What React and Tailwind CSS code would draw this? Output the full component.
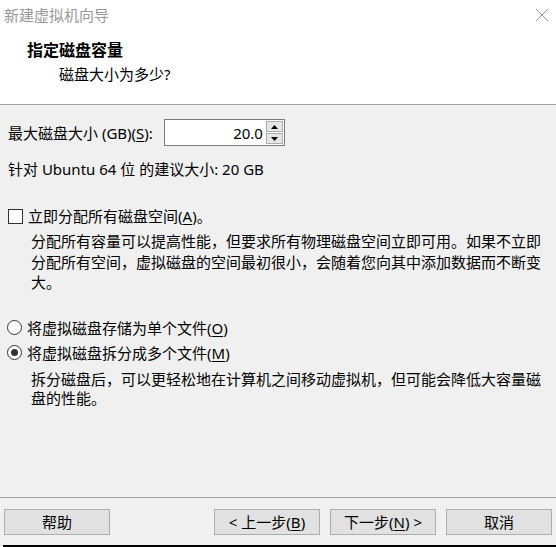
const FONT = { fontFamily: '"Noto Sans", "Noto Sans CJK SC", sans-serif' };

function Key({ k }) {
  return (
    <>
      (<span className="underline underline-offset-2">{k}</span>)
    </>
  );
}

function Radio({ checked, children }) {
  return (
    <div className="flex h-[20px] items-center">
      <span className="ml-[7px] flex h-[15px] w-[15px] items-center justify-center rounded-full border border-[#333] bg-white">
        {checked && <span className="h-[7px] w-[7px] rounded-full bg-[#333]" />}
      </span>
      <span className="ml-[5px]">{children}</span>
    </div>
  );
}

function Button({ children }) {
  return (
    <button className="flex h-[26px] w-[106px] items-center justify-center border border-[#adadad] bg-[#e1e1e1] text-[15px] text-black">
      {children}
    </button>
  );
}

export default function App() {
  return (
    <div
      className="flex h-[547px] w-[556px] flex-col overflow-hidden bg-[#f0f0f0] text-[15px] leading-[20px] text-black"
      style={FONT}
    >
      <div className="h-[105px] shrink-0 border-b border-[#a0a0a0] bg-white">
        <div className="flex h-[30px] items-center justify-between pl-[4px] pr-[7px]">
          <span className="text-[#999]">新建虚拟机向导</span>
          <svg width="14" height="14" viewBox="0 0 14 14" className="text-[#999]">
            <path d="M1 1 L13 13 M13 1 L1 13" stroke="currentColor" strokeWidth="1" fill="none" />
          </svg>
        </div>
        <div className="pl-[27px] pt-[10px] text-[16px] font-bold">指定磁盘容量</div>
        <div className="pl-[59px] pt-[4px]">磁盘大小为多少?</div>
      </div>

      <div className="flex-1 px-[8px]">
        <div className="mt-[14px] flex items-center">
          <span>
            最大磁盘大小 (GB)<Key k="S" />:
          </span>
          <div className="ml-[11px] flex h-[27px] w-[121px] border border-[#7a7a7a] bg-white">
            <div className="flex flex-1 items-center justify-end pr-[2px]">20.0</div>
            <div className="flex w-[19px] flex-col gap-px bg-white p-px">
              <div className="flex flex-1 items-center justify-center border border-[#adadad] bg-[#e6e6e6]">
                <svg width="7" height="4" viewBox="0 0 7 4">
                  <path d="M0 4 L3.5 0 L7 4 Z" fill="#000" />
                </svg>
              </div>
              <div className="flex flex-1 items-center justify-center border border-[#adadad] bg-[#e6e6e6]">
                <svg width="7" height="4" viewBox="0 0 7 4">
                  <path d="M0 0 L3.5 4 L7 0 Z" fill="#000" />
                </svg>
              </div>
            </div>
          </div>
        </div>

        <div className="mt-[13px]">针对 Ubuntu 64 位 的建议大小: 20 GB</div>

        <div className="mt-[27px] flex h-[20px] items-center">
          <span className="h-[15px] w-[15px] border border-[#333] bg-white" />
          <span className="ml-[5px]">
            立即分配所有磁盘空间<Key k="A" />。
          </span>
        </div>
        <div className="mt-[5px] pl-[23px] leading-[20.5px]">
          分配所有容量可以提高性能，但要求所有物理磁盘空间立即可用。如果不立即分配所有空间，虚拟磁盘的空间最初很小，会随着您向其中添加数据而不断变大。
        </div>

        <div className="-mx-[8px] mt-[25px]">
          <Radio>
            将虚拟磁盘存储为单个文件<Key k="O" />
          </Radio>
          <div className="mt-[5px]">
            <Radio checked>
              将虚拟磁盘拆分成多个文件<Key k="M" />
            </Radio>
          </div>
        </div>
        <div className="mt-[7px] pl-[23px] leading-[19.5px]">
          拆分磁盘后，可以更轻松地在计算机之间移动虚拟机，但可能会降低大容量磁盘的性能。
        </div>
      </div>

      <div className="h-[48px] shrink-0 border-t border-[#a0a0a0] pt-[11px]">
        <div className="flex px-[4px]">
          <Button>帮助</Button>
          <div className="ml-auto flex gap-[10px]">
            <Button>
              &lt; 上一步<Key k="B" />
            </Button>
            <Button>
              下一步<Key k="N" /> &gt;
            </Button>
            <Button>取消</Button>
          </div>
        </div>
      </div>
      <div className="ml-[3px] h-[2px] shrink-0 bg-black" />
    </div>
  );
}
